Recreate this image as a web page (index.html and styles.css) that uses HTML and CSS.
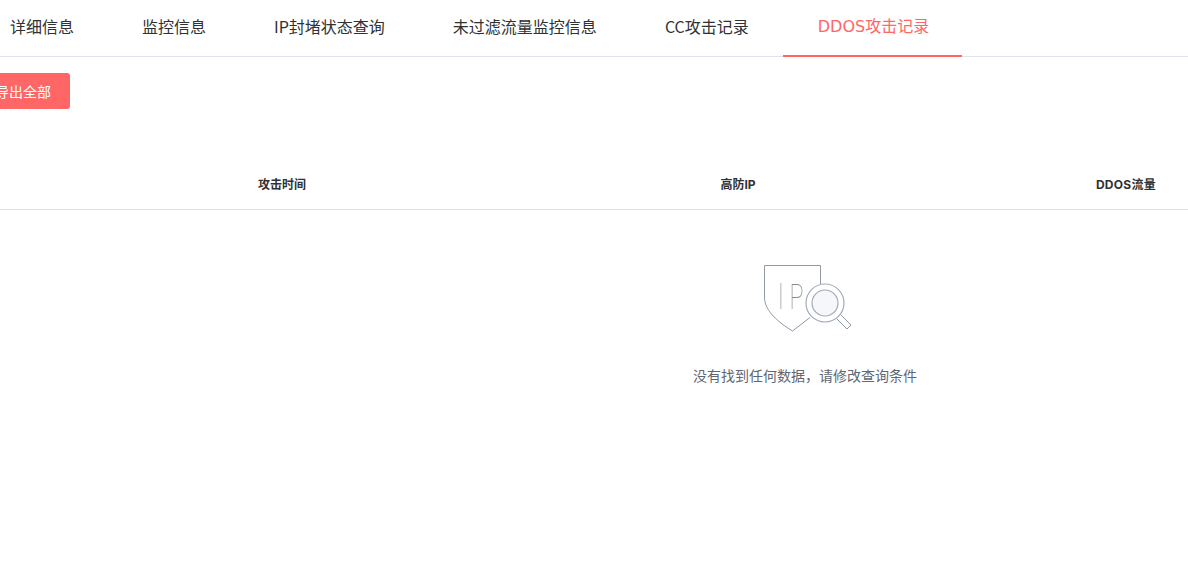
FILE: index.html
```html
<!DOCTYPE html>
<html lang="zh-CN">
<head>
<meta charset="utf-8">
<title>DDOS攻击记录</title>
<link rel="stylesheet" href="styles.css">
</head>
<body>
<div class="viewport">
  <div class="page">
    <nav class="tabs">
      <a class="tab">详细信息</a>
      <a class="tab">监控信息</a>
      <a class="tab">IP封堵状态查询</a>
      <a class="tab">未过滤流量监控信息</a>
      <a class="tab">CC攻击记录</a>
      <a class="tab tab-active">DDOS攻击记录</a>
    </nav>
    <div class="toolbar">
      <button class="btn" type="button">导出全部</button>
    </div>
    <div class="thead">
      <div class="th">攻击时间</div>
      <div class="th">高防IP</div>
      <div class="th th-wide">DDOS流量</div>
    </div>
    <div class="empty">
      <svg class="empty-icon" width="90" height="68" viewBox="0 0 90 68" aria-hidden="true">
        <path class="ic-line" d="M56.5 19.5V0.5H0.5V33C1 46 14 57 28.5 66L46 52.5"/>
        <g class="ic-letters">
          <text class="ic-text" transform="translate(14 44) scale(.62 1)">I</text>
          <text class="ic-text" transform="translate(25.500 44) scale(.65 1)">P</text>
        </g>
        <path class="ic-line" d="M76.400 49.400L87 60L83 64L72.400 53.400"/>
        <circle class="ic-line ic-ring" cx="61" cy="38" r="19"/>
        <circle class="ic-line ic-lens" cx="61" cy="38" r="13"/>
      </svg>
      <p class="empty-text">没有找到任何数据，请修改查询条件</p>
    </div>
  </div>
</div>
</body>
</html>
```
FILE: styles.css
```css
html, body {
  margin: 0;
  padding: 0;
  background: #fff;
}
.viewport {
  width: 1188px;
  height: 575px;
  overflow: hidden;
  font-family: "Noto Sans CJK SC", "Liberation Sans", sans-serif;
}
.page {
  width: 1658px;
  margin-left: -24px;
}
.tabs {
  display: flex;
  height: 56px;
  border-bottom: 1px solid #dfe3ec;
}
.tab {
  height: 56px;
  padding: 0 34px;
  line-height: 53px;
  font-size: 16px;
  color: #303133;
  white-space: nowrap;
  box-sizing: border-box;
}
.tab-active {
  font-family: "DejaVu Sans", "Noto Sans CJK SC", sans-serif;
  color: #ff6666;
  padding: 0 33px 0 35px;
  height: 57px;
  border-bottom: 2px solid #ff6666;
}
.toolbar {
  padding-top: 16px;
}
.btn {
  display: block;
  width: 94px;
  height: 36px;
  border: 0;
  border-radius: 3px;
  background: #ff6666;
  color: #fff;
  font: inherit;
  font-size: 14px;
  padding: 0;
}
.thead {
  display: grid;
  grid-template-columns: 612px 300px 476px;
  height: 101px;
  border-bottom: 1px solid #e0e0e6;
  box-sizing: border-box;
}
.th {
  padding-top: 67px;
  font-family: Inter, "Noto Sans CJK SC", sans-serif;
  font-size: 12px;
  font-weight: 700;
  line-height: 18px;
  color: #303133;
  text-align: center;
}
.th-wide {
  letter-spacing: .3px;
}
.empty {
  display: flex;
  flex-direction: column;
  align-items: center;
  padding-top: 55px;
}
.empty-icon {
  display: block;
  margin-left: 8px;
}
.empty-text {
  margin: 31px 0 0;
  font-size: 14px;
  line-height: 22px;
  color: #606672;
}
.ic-line {
  fill: none;
  stroke: #8f99a8;
  stroke-width: 1;
}
.ic-ring {
  fill: #fff;
  stroke: #a3acb9;
  stroke-width: 1.2;
}
.ic-lens {
  fill: #f5f7fa;
  stroke: #a3acb9;
  stroke-width: 1.2;
}
.ic-letters {
  filter: grayscale(1);
}
.ic-text {
  font-family: Roboto, sans-serif;
  font-weight: 100;
  font-size: 36px;
  fill: #7f8a9a;
}
```
